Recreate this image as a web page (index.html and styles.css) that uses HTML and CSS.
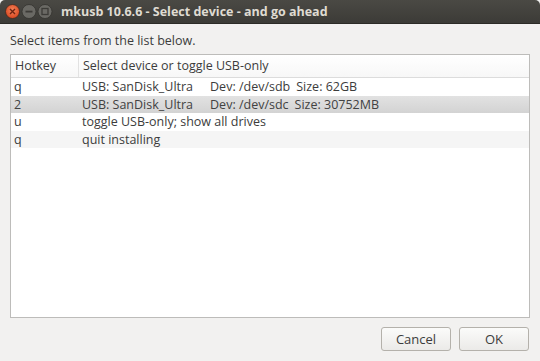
FILE: index.html
```html
<!DOCTYPE html>
<html>
<head>
  <title>mkusb 10.6.6 - Select device - and go ahead</title>
  <link rel="stylesheet" href="styles.css">
</head>
<body>
  <div class="window">
    <div class="titlebar">
      <svg class="controls" width="54" height="23" viewBox="0 0 54 23">
        <defs>
          <radialGradient id="closeg" cx="50%" cy="40%" r="60%">
            <stop offset="0" stop-color="#f5845a"/>
            <stop offset="1" stop-color="#d8461f"/>
          </radialGradient>
        </defs>
        <circle cx="12.5" cy="11.5" r="7" fill="url(#closeg)" stroke="#3a2a22" stroke-width="0.8"/>
        <path d="M10 9 L15 14 M15 9 L10 14" stroke="#6e2412" stroke-width="1.4"/>
        <circle cx="29" cy="11.5" r="7" fill="#6a6964" stroke="#33322e" stroke-width="0.8"/>
        <rect x="25.5" y="10.7" width="7" height="1.8" fill="#3c3b37"/>
        <circle cx="45" cy="11.5" r="7" fill="#6a6964" stroke="#33322e" stroke-width="0.8"/>
        <rect x="42" y="8.5" width="6" height="6" fill="none" stroke="#3c3b37" stroke-width="1.3"/>
      </svg>
      <span class="title">mkusb 10.6.6 - Select device - and go ahead</span>
    </div>

    <div class="content">
      <p class="prompt">Select items from the list below.</p>

      <div class="list">
        <div class="row header">
          <div class="col key">Hotkey</div>
          <div class="col desc">Select device or toggle USB-only</div>
        </div>
        <div class="row">
          <div class="col key">q</div>
          <div class="col desc">USB: SanDisk_Ultra<span class="dev">Dev: /dev/sdb</span><span class="size">Size: 62GB</span></div>
        </div>
        <div class="row selected">
          <div class="col key">2</div>
          <div class="col desc">USB: SanDisk_Ultra<span class="dev">Dev: /dev/sdc</span><span class="size">Size: 30752MB</span></div>
        </div>
        <div class="row">
          <div class="col key">u</div>
          <div class="col desc">toggle USB-only; show all drives</div>
        </div>
        <div class="row alt">
          <div class="col key">q</div>
          <div class="col desc">quit installing</div>
        </div>
      </div>

      <div class="buttons">
        <button class="btn">Cancel</button>
        <button class="btn">OK</button>
      </div>
    </div>
  </div>
</body>
</html>
```

FILE: styles.css
```css
body {
  margin: 0;
  background: #f2f1f0;
  font-family: "Open Sans", "Noto Sans", sans-serif;
  font-size: 12.5px;
  color: #3c3c3c;
}

.window {
  width: 540px;
  height: 361px;
  display: flex;
  flex-direction: column;
  overflow: hidden;
}

.titlebar {
  height: 23px;
  flex: none;
  display: flex;
  align-items: center;
  background: linear-gradient(#4a4944, #3c3b37);
  border-radius: 5px 5px 0 0;
  border-bottom: 1px solid #2c2b27;
}

.controls {
  flex: none;
}

.title {
  margin-left: 7px;
  color: #dfdbd2;
  font-weight: bold;
  font-size: 12.5px;
}

.content {
  flex: 1;
  display: flex;
  flex-direction: column;
  padding: 0 10px;
}

.prompt {
  margin: 9px 0 5px;
  line-height: 16px;
}

.list {
  height: 262px;
  background: #fff;
  border: 1px solid #bdbcba;
}

.row {
  display: flex;
  height: 17.5px;
  line-height: 17.5px;
  white-space: pre;
}

.row .key {
  width: 68px;
  padding-left: 3px;
  box-sizing: border-box;
}

.row .desc {
  padding-left: 3px;
}

.header {
  height: 22px;
  line-height: 22px;
  background: linear-gradient(#ffffff, #f7f7f7);
  border-bottom: 1px solid #dcdcdc;
}

.header .key {
  border-right: 1px solid #e2e2e2;
  padding-left: 4px;
}

.header .desc {
  padding-left: 4px;
}

.selected {
  background: linear-gradient(#e2e2e2, #d3d3d3);
  color: #424242;
}

.alt {
  background: #f5f5f5;
}

.dev {
  margin-left: 17px;
}

.size {
  margin-left: 6px;
}

.buttons {
  display: flex;
  justify-content: flex-end;
  gap: 8px;
  margin-top: 9px;
  padding-right: 1px;
}

.btn {
  width: 70px;
  height: 24px;
  font-family: inherit;
  font-size: 13px;
  color: #3c3c3c;
  background: linear-gradient(#fbfbfa, #ebeae8);
  border: 1px solid #b4b1ab;
  border-radius: 3px;
}
```
